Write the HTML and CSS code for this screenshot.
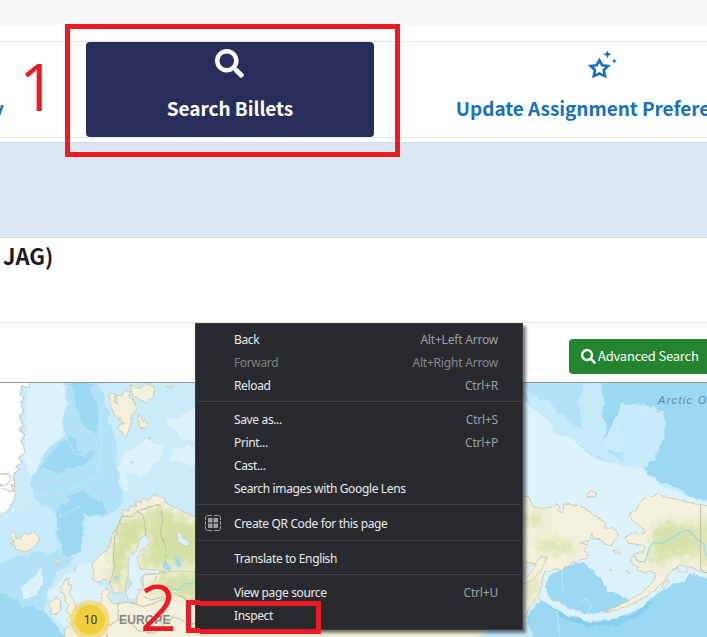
FILE: index.html
```
<!DOCTYPE html>
<html lang="en">
<head>
<meta charset="utf-8">
<title>Search Billets</title>
<link rel="stylesheet" href="styles.css">
</head>
<body>
<div class="topbar"></div>
<nav class="tabs">
  <div class="tab tab-prev"><span class="tab-label">y</span></div>
  <div class="tab tab-active">
    <svg class="search-icon" viewBox="0 0 512 512"><path d="M505 442.700 405.300 343c-4.500-4.500-10.600-7-17-7H372c27.600-35.300 44-79.700 44-128C416 93.100 322.900 0 208 0S0 93.100 0 208s93.100 208 208 208c48.300 0 92.700-16.400 128-44v16.300c0 6.400 2.500 12.500 7 17l99.700 99.700c9.400 9.400 24.600 9.400 33.900 0l28.300-28.300c9.400-9.400 9.400-24.600.1-34zM208 336c-70.700 0-128-57.200-128-128 0-70.700 57.200-128 128-128 70.700 0 128 57.200 128 128 0 70.700-57.200 128-128 128z"/></svg>
    <span class="tab-label">Search Billets</span>
  </div>
  <div class="tab tab-next">
    <svg class="stars-icon" viewBox="0 0 30 30"><path class="star" d="M12.400 10.300 15.100 15.200 21.200 16 16.800 20 18 26.100 12.400 23.500 6.800 26.100 8 20 3.600 16 9.700 15.200Z"/><path d="M20.400 0.500 21.600 3 24.400 4.300 21.600 5.600 20.400 8.300 19.200 5.600 16.400 4.300 19.200 3ZM27.300 8.600 28.100 10.300 29.800 11.100 28.100 11.900 27.300 13.500 26.500 11.900 24.900 11.100 26.500 10.300Z"/></svg>
    <span class="tab-label">Update Assignment Preferences</span>
  </div>
</nav>
<div class="band"></div>
<header class="title-row"><h1>JAG)</h1></header>
<div class="toolbar">
  <button class="advanced"><svg viewBox="0 0 512 512"><path d="M505 442.700 405.300 343c-4.500-4.500-10.600-7-17-7H372c27.600-35.300 44-79.700 44-128C416 93.100 322.900 0 208 0S0 93.100 0 208s93.100 208 208 208c48.300 0 92.700-16.400 128-44v16.300c0 6.400 2.500 12.500 7 17l99.700 99.700c9.400 9.400 24.600 9.400 33.900 0l28.300-28.300c9.400-9.400 9.400-24.600.1-34zM208 336c-70.700 0-128-57.200-128-128 0-70.700 57.200-128 128-128 70.700 0 128 57.200 128 128 0 70.700-57.200 128-128 128z"/></svg><span>Advanced Search</span></button>
</div>
<div class="map">
<svg viewBox="0 383 707 254" width="707" height="254">
  <defs>
    <filter id="haze" x="-20%" y="-20%" width="140%" height="140%"><feGaussianBlur stdDeviation="12" result="b"/><feTurbulence type="fractalNoise" baseFrequency=".05" numOctaves="4" seed="9" result="n"/><feDisplacementMap in="b" in2="n" scale="50" xChannelSelector="R" yChannelSelector="G"/></filter>
    <filter id="rough" x="-5%" y="-5%" width="110%" height="110%"><feTurbulence type="fractalNoise" baseFrequency=".022" numOctaves="4" seed="4" result="n"/><feDisplacementMap in="SourceGraphic" in2="n" scale="34" xChannelSelector="R" yChannelSelector="G"/><feGaussianBlur stdDeviation="2"/></filter>
    <filter id="coast" x="-5%" y="-5%" width="110%" height="110%"><feTurbulence type="fractalNoise" baseFrequency=".07" numOctaves="2" seed="3" result="n"/><feDisplacementMap in="SourceGraphic" in2="n" scale="9" xChannelSelector="R" yChannelSelector="G"/></filter>
    <clipPath id="scan"><path d="M278 580 300 555 322 542 338 495 365 440 390 412 430 385 470 373 495 385 520 410 560 430 600 455V810H430L345 665 320 630 290 640 278 620Z"/></clipPath>
  </defs>
  <rect x="0" y="383" width="707" height="254" fill="#c9ebfa"/>
  <g transform="translate(0 370) scale(.33333)">
    <g filter="url(#rough)">
      <path class="sea-light" d="M90 20H188L195 180 140 240 95 320 75 300 70 180Z"/>
      <path class="sea-light" d="M375 250 440 210 490 225 470 280 420 320 360 300ZM500 150 620 110V230L540 200ZM330 310 370 270 390 370 340 350ZM520 230 620 240V290L510 275Z"/>
      <path class="sea-soft" d="M-20 470 80 410 150 370 180 440 190 550 80 600-20 660Z"/>
      <path class="sea-mid" d="M192 20H290L340 180 350 290 372 370 360 405 310 440 180 440 110 390 95 320 140 240 200 190Z"/>
      <path class="sea-deep" d="M205 195 245 250 285 245 250 290 160 305 115 300 150 255ZM205 20H270L300 150 295 190 245 170 225 100ZM180 400 250 360 305 400 320 430 240 440 245 545 190 555 170 470Z"/>
      <path class="sea-mid" d="M-20 590 60 560 180 540 220 560 180 600 150 650 130 730 220 830H-20Z"/>
      <path class="sea-deep" d="M-20 660 60 690 70 710 130 720 210 830H-20Z"/>
      <path class="sea-light" d="M60 650 130 600 120 660 80 690ZM200 600 280 580 285 640 330 660 310 740 220 780 150 740 145 680Z"/>
    </g>
    <g class="trace"><path d="M190 185 225 250 260 260M300 130 305 230 290 320 160 380 80 370M175 400 180 440 240 410"/></g>
    <path class="ice" filter="url(#coast)" d="M-20 20H95L88 52 65 50 60 75 72 80 62 100 70 125 58 140 70 165 55 180 75 195 62 210 75 245 55 265 68 280 45 290 60 300 40 315 45 350 30 345 48 370 42 390 25 420-20 447ZM-20 315 25 310 35 330 15 345-20 340M5 355 40 365"/>
    <g class="land" filter="url(#coast)">
      <path d="M327 70 345 72 342 95 352 100 350 75 366 78 372 60 388 65 390 88 400 85 405 110 410 120 395 135 390 170 378 205 365 185 352 178 360 165 375 160 355 150 365 145 345 140 335 115Z"/>
      <path d="M390 45 420 55 440 42 465 52 460 80 435 98 418 88 398 75ZM414 130 425 140 423 150 440 158 437 175 420 172 415 150ZM500 50l15-5 5 5-10 5ZM445 206l5-5 3 3-4 6ZM392 278l8-4 0 6ZM155 376l8-2 0 5-5 2Z"/>
      <path d="M30 490 42 485 48 495 45 507 65 500 70 490 85 494 102 485 110 496 118 500 115 520 90 540 72 546 45 536 47 526 30 520 45 515 30 504 38 500Z"/>
      <path d="M168 568l10-2-3 20-6-8ZM220 600l7-8-2 14Z"/>
      <path d="M192 630 208 625 203 645 217 645 207 670 219 685 230 720 247 730 240 752 210 760 200 750 212 735 198 725 207 705 195 695 195 675 180 665 187 650ZM150 695 168 683 182 690 182 720 168 735 150 732 155 717 148 710Z"/>
      <path d="M305 700 305 665 320 655 330 662 322 682 340 702 390 697 410 700 412 660 430 650 428 615 470 612 620 585V820H195L195 775 218 765 245 735 275 715Z"/>
      <path d="M278 580 300 555 322 542 338 495 365 440 372 418 385 424 390 405 404 410 408 395 424 399 430 385 445 391 455 377 470 373 482 380 495 385 493 397 520 410 560 430 620 455V605H430L415 590 420 600 385 620 378 635 374 664 342 672 330 640 320 627 290 638 278 622 282 600 276 592Z"/>
    </g>
    <g clip-path="url(#scan)"><path class="green" d="M340 500 380 440 425 430 435 500 385 550 370 670 335 650 335 580ZM435 430 480 410 560 450 620 470V580L480 590 420 590 440 540 450 500ZM480 620 620 600V690L450 660Z" filter="url(#haze)" opacity=".9"/></g>
    <path class="gulf" filter="url(#coast)" d="M418 508 436 496 447 510 440 530 418 545 413 575 420 598 480 600 478 610 435 612 420 625 430 650 405 690 385 690 378 665 397 640 385 625 385 590 388 560 412 540ZM530 490 545 485 547 505 570 515 565 530 535 515Z"/>
    <path class="lake" d="M490 580 500 577 516 595 508 603 490 595ZM525 558 535 560 545 585 535 593 525 575ZM340 622 354 616 356 623 343 632Z"/>
    <path class="river" d="M500 645 520 660 540 658 555 640 580 642 600 630"/>
    <path class="border" filter="url(#coast)" d="M365 440 395 440 410 425 430 435 438 498M410 425 450 410 480 405 490 450 480 485 500 550 490 590M365 440 345 500 340 560 345 590 330 640M410 660 455 655 470 620M430 680 455 690 490 680 500 710 480 750 500 780M350 700 355 750 320 770 320 801M355 750 390 755 410 780 460 790 490 770 520 740 570 760 600 760M390 698 430 710 490 690 525 670 560 690 600 680"/>
  </g>
  <g transform="translate(520 320) scale(.33333)">
    <g filter="url(#rough)">
      <path class="sea-light" d="M-20 200 60 270 140 330 260 430 370 445 440 510 620 560V980H-20Z"/>
      <path class="sea-mid" d="M0 165H250L260 390 310 400 310 430 240 425 140 350 80 290 0 230Z"/>
      <path class="sea-deep" d="M240 165H620V555L500 520 420 480 375 445 400 420 440 300 400 260 300 260 250 380Z"/>
      <path class="sea-soft" d="M185 190 240 190 250 260 260 390 240 395 190 340 180 270ZM300 270 350 250 365 280 345 380 370 435 310 420ZM0 205 90 250 150 310 250 380 310 430 260 430 140 350 60 290Z"/>
      <path class="sea-soft" d="M375 285 430 270 440 310 420 390 380 440 350 400Z"/>
      <path class="sea-deep" d="M70 780 120 750 190 725 230 760 265 810 320 840 290 865 240 885 160 875 80 820ZM-20 980 60 830 110 870 190 905 280 900 370 860 440 800 520 765 620 790V980Z"/>
      <path class="sea-deeper" d="M70 850 160 895 240 908 320 890 400 845 390 870 320 905 240 920 150 908Z"/>
    </g>
    <g class="trace"><path d="M360 290 370 350 355 390M410 270 385 330 395 370 370 420M125 750 130 820M180 845 200 835 215 860 200 880M110 860 120 950"/></g>
    <g class="land" filter="url(#coast)">
      <path d="M-20 525 25 530 38 560 70 565 105 560 110 550 118 560 115 572 122 580 130 572 130 552 180 557 210 575 255 607 255 625 280 623 295 645 275 678 250 670 238 655 220 657 215 640 210 660 180 668 203 675 190 690 203 702 205 713 155 727 125 750 110 745 90 755 75 752 65 785 60 820 30 860 15 893-5 905V735L20 728 45 730 60 712 80 712 70 740 40 780 15 790-20 790Z"/>
      <path d="M620 565 545 555 500 545 470 538 430 530 412 520 400 530 375 535 355 555 350 570 328 582 330 597 350 610 372 630 375 640 350 642 345 635 315 652 325 670 360 674 375 680 370 698 345 700 330 720 340 735 355 740 350 750 375 758 390 752 405 760 400 785 370 815 330 840 290 860 250 877 310 865 370 835 400 815 430 785 455 750 480 737 510 740 540 755 620 775Z"/>
      <path d="M200 522 215 512 230 520 225 530 202 530ZM278 692 290 690 303 700 295 703ZM318 752 330 752 332 760 323 760ZM430 790 445 780 448 787 430 808 425 800ZM268 748l7 2-3 4Z"/>
    </g>
    <path class="green" filter="url(#haze)" d="M395 620 440 600 500 620 535 600 540 700 500 710 450 715 410 740 390 720 400 680ZM550 600 620 590V740L548 725ZM15 590 70 580 65 610 25 625ZM25 795 50 770 45 820 20 850ZM30 670 110 660 170 685 145 700 80 690Z" opacity=".8"/>
    <path class="river" d="M340 705 355 725 375 725 390 680 400 668 430 670 490 632 510 632 530 657 552 670 560 710"/>
    <path class="border" d="M542 558V750L600 775"/>
    <path class="islands" d="M85 830 110 845 145 867 200 885 250 880 310 865 370 835"/>
    <path class="gulf" d="M458 752 475 742 475 755 500 757 505 742 480 735ZM15 742 50 732 30 762 15 775Z"/>
  </g>
  <path class="base" d="M195 610H520L524 606 521 637H195Z"/>
  <path class="sea-soft" d="M478 637 490 629 520 629 526 620 534 637Z"/>
  <circle cx="90" cy="620" r="20" fill="#f1d357" opacity=".65"/>
  <circle cx="90" cy="620" r="15" fill="#f0cb31" opacity=".9"/>
  <text class="cluster" x="90.500" y="624">10</text>
  <text class="continent" x="119" y="623.500" textLength="52">EUROPE</text>
  <text class="ocean" x="658" y="404">Arctic Ocean</text>
</svg>
</div>

<div class="menu">
  <div class="item"><span>Back</span><kbd>Alt+Left Arrow</kbd></div>
  <div class="item disabled"><span>Forward</span><kbd>Alt+Right Arrow</kbd></div>
  <div class="item"><span>Reload</span><kbd>Ctrl+R</kbd></div>
  <hr>
  <div class="item"><span>Save as...</span><kbd>Ctrl+S</kbd></div>
  <div class="item"><span>Print...</span><kbd>Ctrl+P</kbd></div>
  <div class="item"><span>Cast...</span></div>
  <div class="item"><span>Search images with Google Lens</span></div>
  <hr>
  <div class="item item-icon"><svg viewBox="0 0 16 16"><path d="M3 3h4.500v4.500H3zM8.500 3H13v4.500H8.500zM3 8.500h4.500V13H3zM8.500 8.500H13V13H8.500z"/><path class="frame" d="M.5 5V2L2 .5H7M9 .5H14L15.500 2V5M.5 6V10M15.500 6V10M.5 11V14L2 15.500H7M9 15.500H14L15.500 14V11"/></svg><span>Create QR Code for this page</span></div>
  <hr>
  <div class="item"><span>Translate to English</span></div>
  <hr>
  <div class="item"><span>View page source</span><kbd>Ctrl+U</kbd></div>
  <div class="item"><span>Inspect</span></div>
</div>

<div class="mark mark-search"></div>
<div class="mark mark-inspect-stub"></div>
<div class="mark mark-inspect"></div>
<div class="step step-one">1</div>
<div class="step step-two">2</div>
</body>
</html>
```
FILE: styles.css
```
* { box-sizing: border-box; }
body {
  margin: 0;
  width: 707px;
  height: 637px;
  overflow: hidden;
  position: relative;
  background: #fff;
  font-family: "Noto Sans CJK SC", sans-serif;
}
.topbar { height: 25px; background: #f7f7f7; }
.tabs {
  display: flex;
  height: 97px;
  margin-top: 16px;
  border-top: 1px solid #e2e3e4;
  border-bottom: 1px solid #e2e3e4;
  overflow: hidden;
}
.tab {
  flex: none;
  display: flex;
  flex-direction: column;
  align-items: center;
  height: 95px;
  color: #176fc1;
}
.tab-label {
  font-size: 19px;
  font-weight: 700;
  line-height: 30px;
  letter-spacing: -.05px;
  white-space: nowrap;
  margin-top: auto;
  margin-bottom: 14px;
}
.tab-prev { width: 86px; align-items: flex-start; }
.tab-prev .tab-label { margin-left: -7px; }
.tab-active { width: 288px; background: #282e59; color: #fff; border-radius: 4px; }
.tab-next { width: 456px; }
.tab-next .tab-label { margin-left: 4px; }
.search-icon { width: 29px; height: 29px; margin-top: 7px; margin-right: 1px; fill: #fff; }
.stars-icon { width: 30px; height: 30px; margin-top: 8px; margin-right: 1px; fill: #176fc1; }
.star { fill: none; stroke: #176fc1; stroke-width: 2.6; }
.band {
  height: 96px;
  margin-top: 4px;
  background: #dbe8f4;
  border-top: 1px solid #c9dcec;
  border-bottom: 1px solid #c9dcec;
}
.title-row { height: 85px; border-bottom: 1px solid #e2e3e5; padding: 1px 0 0 3px; }
h1 { margin: 0; font-size: 22px; line-height: 32px; font-weight: 700; color: #1b1b1b; }
.toolbar { display: flex; height: 60px; padding: 16px 0 0 569px; border-bottom: 1px solid #999; overflow: hidden; }
.advanced {
  flex: none;
  display: flex;
  align-items: center;
  gap: 2px;
  width: 150px;
  height: 35px;
  padding: 0 0 0 12px;
  border: 0;
  border-radius: 4px;
  background: #25842f;
  color: #fff;
  font: 13px/33px "Noto Sans CJK SC", sans-serif;
  letter-spacing: -.2px;
  white-space: nowrap;
}
.advanced span { height: 35px; }
.advanced svg { width: 15px; height: 15px; fill: #fff; }
.map { height: 254px; }
.map svg { display: block; }
.sea-light, .gulf { fill: #dcf2fc; }
.sea-soft { fill: #c5eafa; }
.sea-mid { fill: #b2e2f7; }
.sea-deep { fill: #9bd9f3; }
.sea-deeper { fill: #85ceee; }
.gulf { stroke: #c9c4a8; stroke-width: 2; }
.trace { fill: none; stroke: #c9ebf9; stroke-width: 4; opacity: .5; }
.ice { fill: #fff; stroke: #c3bfb0; stroke-width: 3; }
.land { fill: #f3f0dc; stroke: #c9c4a8; stroke-width: 2.5; stroke-linejoin: round; }
.base { fill: #f3f0dc; }
.green { fill: #d0df9f; }
.lake { fill: #97dbf5; }
.river { fill: none; stroke: #97d9ef; stroke-width: 4; }
.border { fill: none; stroke: #c3bda4; stroke-width: 3; }
.islands { fill: none; stroke: #e8e3c8; stroke-width: 5; stroke-dasharray: 9 13; }
.cluster { font: 12px Roboto, sans-serif; text-anchor: middle; fill: #333; }
.continent { font: bold 12px "Liberation Sans", sans-serif; fill: #858585; letter-spacing: .5px; }
.ocean { font: italic 11px "Liberation Sans", sans-serif; fill: #5f82aa; letter-spacing: 1.3px; }

.menu {
  position: absolute;
  left: 195px;
  top: 323px;
  width: 328px;
  height: 307px;
  padding: 4px 0 0;
  background: #292a2d;
  border: 1px solid #3c3d40;
  box-shadow: 3px 3px 3px rgba(0, 0, 0, .5);
  font: 12px/23px "Noto Sans", sans-serif;
  letter-spacing: -.36px;
  color: #e8eaed;
}
.item {
  display: flex;
  justify-content: space-between;
  position: relative;
  height: 23px;
  padding: 0 24px 0 38px;
  white-space: nowrap;
}
.item kbd { font: inherit; letter-spacing: -.2px; color: #9aa0a6; }
.item.disabled { color: #7c8084; }
.item.disabled kbd { color: #85898e; }
.item-icon { height: 25px; padding-top: 1px; }
.item-icon svg { position: absolute; left: 9px; top: 4px; width: 16px; height: 16px; fill: #9aa0a6; }
.frame { fill: none; stroke: #9aa0a6; }
.menu hr { height: 1px; margin: 4px 1px 6px; border: 0; background: #3f4144; }
.mark { position: absolute; border: 5px solid #ed1c24; }
.mark-search { left: 65px; top: 24px; width: 335px; height: 133px; }
.mark-inspect-stub { left: 186px; top: 600px; width: 14px; height: 33px; border-right: 0; }
.mark-inspect { left: 200px; top: 601px; width: 121px; height: 33px; border-left: 0; }
.step { position: absolute; color: #ed1c24; font-family: "Open Sans", sans-serif; line-height: 1; }
.step-one { left: 19px; top: 54px; font-size: 65px; }
.step-two { left: 140px; top: 575px; font-size: 64px; }
```
